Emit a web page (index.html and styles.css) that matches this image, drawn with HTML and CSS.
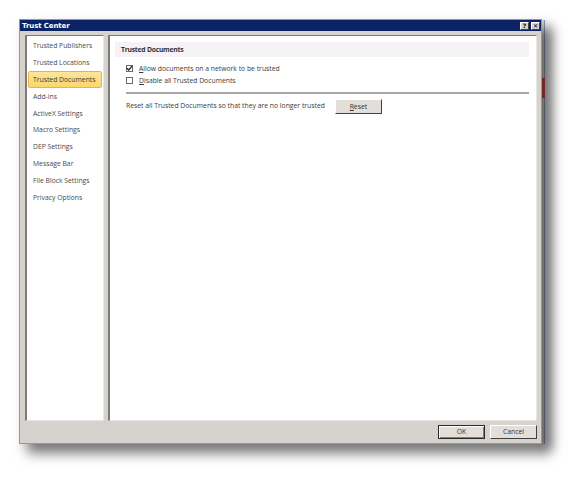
FILE: index.html
```html
<!DOCTYPE html>
<html>
<head>
<meta charset="utf-8">
<link rel="stylesheet" href="styles.css">
</head>
<body>
<div class="stage">
  <div class="dialog">
    <div class="titlebar">
      <span class="title">Trust Center</span>
      <span class="tbtns">
        <span class="tbtn">?</span>
        <span class="tbtn">✕</span>
      </span>
    </div>
    <div class="content">
      <ul class="nav">
        <li>Trusted Publishers</li>
        <li>Trusted Locations</li>
        <li class="active">Trusted Documents</li>
        <li>Add-ins</li>
        <li>ActiveX Settings</li>
        <li>Macro Settings</li>
        <li>DEP Settings</li>
        <li>Message Bar</li>
        <li>File Block Settings</li>
        <li>Privacy Options</li>
      </ul>
      <div class="main">
        <div class="section-head">Trusted Documents</div>
        <div class="options">
          <label class="opt"><span class="cb checked"><svg viewBox="0 0 7 7" width="7" height="7"><path d="M1 3.2 L2.8 5 L6 1.2" fill="none" stroke="#222" stroke-width="1.3"/></svg></span><span><u>A</u>llow documents on a network to be trusted</span></label>
          <label class="opt"><span class="cb"></span><span><u>D</u>isable all Trusted Documents</span></label>
        </div>
        <div class="sep"></div>
        <div class="reset-row">
          <span>Reset all Trusted Documents so that they are no longer trusted</span>
          <span class="btn reset-btn"><u>R</u>eset</span>
        </div>
      </div>
    </div>
    <div class="footer">
      <span class="btn ok">OK</span>
      <span class="btn">Cancel</span>
    </div>
  </div>
  <div class="behind">
    <span class="red"></span>
  </div>
</div>
</body>
</html>
```

FILE: styles.css
```css
* { box-sizing: border-box; }
html, body { margin: 0; padding: 0; background: #ffffff; }
body {
  font-family: "Open Sans", "DejaVu Sans", sans-serif;
  font-size: 6.8px;
  color: #3a3a3a;
}
.stage {
  position: relative;
  width: 580px;
  height: 480px;
  padding: 19px 0 0 19px;
}
.dialog {
  position: relative;
  z-index: 2;
  width: 523px;
  height: 425px;
  background: #d6d3ce;
  border: 1px solid #9a9894;
  box-shadow: 8px 9px 12px rgba(0,0,0,0.55);
  display: flex;
  flex-direction: column;
}
.titlebar {
  height: 11px;
  background: #0b2365;
  color: #fff;
  display: flex;
  align-items: center;
  justify-content: space-between;
  padding: 0 1px 0 2px;
}
.title {
  font-family: "DejaVu Sans", sans-serif;
  font-weight: bold;
  font-size: 7px;
  letter-spacing: -0.1px;
}
.tbtns { display: flex; gap: 2px; }
.tbtn {
  width: 9px;
  height: 8px;
  background: #d6d3ce;
  border: 1px solid;
  border-color: #fff #404040 #404040 #fff;
  color: #000;
  font-size: 6px;
  font-weight: bold;
  line-height: 6px;
  text-align: center;
  font-family: "DejaVu Sans", sans-serif;
}
.content {
  flex: 1;
  display: flex;
  gap: 4px;
  padding: 4px 4px 0 5px;
}
.nav {
  list-style: none;
  margin: 0;
  padding: 1px 1px 0 1px;
  width: 79px;
  background: #fff;
  border: 1px solid;
  border-color: #7c7a76 #e8e6e2 #e8e6e2 #7c7a76;
  border-width: 1px 1px 1px 2px;
}
.nav li {
  height: 16.9px;
  line-height: 17px;
  padding-left: 5px;
  color: #4a4a4a;
  white-space: nowrap;
}
.nav li.active {
  background: linear-gradient(#fde69a, #fbd66c);
  border: 1px solid #e7b44c;
  border-radius: 2px;
  line-height: 15px;
  padding-left: 4px;
  color: #3a3a3a;
}
.main {
  flex: 1;
  background: #fff;
  border: 1px solid;
  border-color: #7c7a76 #e8e6e2 #e8e6e2 #7c7a76;
  border-width: 1px 1px 1px 2px;
  padding: 6px 7px 0 5px;
}
.section-head {
  height: 15px;
  line-height: 16px;
  background: #f4f2f5;
  font-weight: bold;
  letter-spacing: -0.25px;
  padding-left: 6px;
  color: #333;
}
.options {
  padding: 8px 0 0 11px;
  display: flex;
  flex-direction: column;
  gap: 5px;
}
.opt {
  display: flex;
  align-items: center;
  gap: 6px;
  height: 7px;
  line-height: 7px;
}
.cb {
  width: 7px;
  height: 7px;
  border: 1px solid #6a6a6a;
  background: #fff;
  position: relative;
  display: inline-flex;
}
.cb svg { position: absolute; left: -1px; top: -1px; }
u { text-decoration: underline; text-underline-offset: 1px; }
.sep {
  margin: 8px 0 0 11px;
  height: 2px;
  background: #a9a8a8;
}
.reset-row {
  display: flex;
  align-items: center;
  gap: 10px;
  padding: 3px 0 0 11px;
}
.btn {
  display: inline-flex;
  align-items: center;
  justify-content: center;
  width: 47px;
  height: 14px;
  background: #e2dfda;
  border: 1px solid;
  border-color: #fff #404040 #404040 #fff;
  color: #333;
}
.reset-btn { margin-top: 2px; height: 15px; }
.footer {
  height: 22px;
  display: flex;
  justify-content: flex-end;
  align-items: center;
  gap: 5px;
  padding: 0 4px 1px 0;
}
.btn.ok {
  border: 1px solid #2a2a2a;
  box-shadow: inset 1px 1px 0 #fff, inset -1px -1px 0 #808080;
}
.behind {
  position: absolute;
  left: 539px;
  top: 20px;
  width: 6px;
  height: 424px;
  background: #d9d7d3;
  border-right: 1px solid #8d99b4;
  z-index: 1;
  box-shadow: 6px 6px 12px rgba(0,0,0,0.4);
}
.red {
  position: absolute;
  left: 3px;
  top: 58px;
  width: 3px;
  height: 20px;
  background: #e04848;
}
```
